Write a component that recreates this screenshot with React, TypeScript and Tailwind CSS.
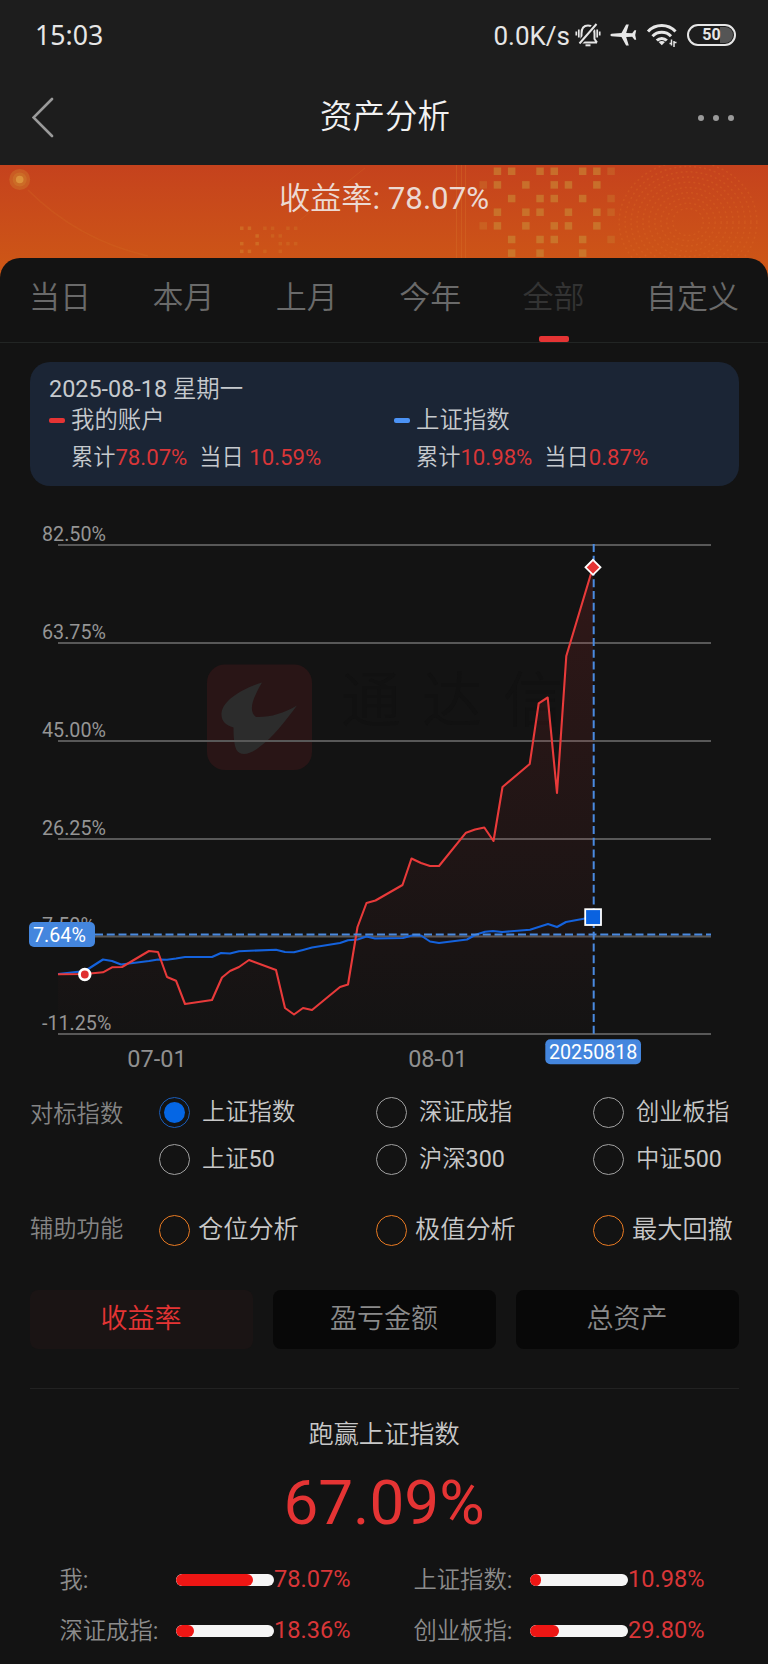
import clsx from "clsx";

const TABS = ["当日", "本月", "上月", "今年", "全部", "自定义"];

const INDEXES = ["上证指数", "深证成指", "创业板指", "上证50", "沪深300", "中证500"];

const TOOLS = ["仓位分析", "极值分析", "最大回撤"];

const MODES = ["收益率", "盈亏金额", "总资产"];

const COMPARE = [
  { label: "我:", value: 78.07 },
  { label: "上证指数:", value: 10.98 },
  { label: "深证成指:", value: 18.36 },
  { label: "创业板指:", value: 29.8 },
];

const GRID = [
  { y: 545, label: "82.50%" },
  { y: 643, label: "63.75%" },
  { y: 741, label: "45.00%" },
  { y: 839, label: "26.25%" },
  { y: 936.5, label: "7.50%" },
  { y: 1034, label: "-11.25%" },
];

const ACCOUNT_LINE =
  "58,974.3 85,974 103,972.3 112,967.3 122,967 149,951 158,952 167,977 176,980.7 185,1004 212,1000 222,977.5 230,971 239,967 249,960 276,970 285,1008 294,1014.5 303,1008 312,1010 340,987 348,984.5 357.5,927 366.5,903 375.5,900.5 402.5,885 411.5,858.5 421,863 430,866 439,866 466,832.7 475,829.5 484.3,827.5 493.5,841 502.5,787 529.7,764 538.7,703.3 547.7,697.5 557,793 566.3,656 593,567";

const INDEX_LINE =
  "58,974 85,971 103,959.5 112,961 121,964.5 149,961 158,959.5 167,959.7 176,958.5 185,957 212,957 221,953 230,953.5 239,951.2 276,949.8 285,952 294,952.3 303,950 312,947.5 340,943 348,940.3 357.5,939.5 366.5,936.5 375,938.5 403,938 412,935.5 421,935.5 430,941.5 439,943 467,939.5 475,935 485,931.8 493,931 502,932 530,929.7 548,924 557,927 566,922 585,918.5 593,917";

// column indexes of the lit squares, row by row
const PIXELS = [
  [1, 2, 4, 5, 7, 8, 9],
  [0, 1, 3, 5, 6, 8],
  [2, 4, 5, 7, 9],
  [1, 3, 4, 6, 8, 9],
  [0, 1, 3, 5, 6, 8],
  [2, 4, 5, 7, 9],
  [2, 4, 7],
];

const SMALL_PIXELS = [
  [0, 1, 3, 4, 6, 7],
  [2, 4, 5],
  [0, 2, 5, 6, 7],
  [0, 1, 3, 5],
];

function StatusBar() {
  return (
    <div className="flex h-[70px] items-center justify-between pl-[35px] pr-8 text-[#e6e6e6]">
      <span className="font-['Noto_Sans'] text-[26.7px] leading-none">15:03</span>
      <div className="flex items-center">
        <span className="pt-px text-[26px] leading-none">0.0K/s</span>
        <svg className="ml-[5px]" width="26" height="26" viewBox="0 0 26 26" fill="none" stroke="currentColor" strokeWidth="2">
          <path d="M4.500 20.500h17.500M6.500 18.500V11.500C6.500 6.500 9 3.500 13 3.500s6.500 3 6.500 8V17l2.500 3.500M4 20.500l2.500-3" />
          <path d="M10.500 23.300h5" strokeWidth="2" />
          <path d="M4 22 21.500 1.500" stroke="#1d1d1d" strokeWidth="5" />
          <path d="M4.500 21.500 21.500 2" />
          <path d="M3.800 7.500v8M1.300 9.500v4M22.200 7.500v8M24.700 9.500v4" strokeWidth="1.700" />
        </svg>
        <svg className="ml-[9px]" width="27" height="24" viewBox="0 0 27 24" fill="currentColor">
          <path d="M1.500 10.700c-1.500.4-1.500 2.200 0 2.600l10 .7 4.600 8.500h2.700L16.200 14l6-.3 2.300 3h1.700L25.200 12l1-4.700h-1.700l-2.300 3-6-.3 2.600-8.500h-2.700L11.500 10z" />
        </svg>
        <svg className="ml-[9px]" width="32" height="26" viewBox="0 0 32 26" fill="none" stroke="currentColor" strokeWidth="3">
          <path d="M2 9.500c7.500-8 20-8 27.500 0M6.500 14.200c5-5.200 13.500-5.200 18.500 0M10.800 18.500c2.800-2.800 7.200-2.800 10 0" />
          <path d="M15.800 23.300l-3.200-3.300c1.900-1.500 4.500-1.500 6.400 0z" fill="currentColor" stroke="none" />
          <path d="M25.500 17.500v6M28 19v6M23.500 21.500h2M28 20.500h2.500" strokeWidth="1.500" />
        </svg>
        <div className="ml-[9px] flex h-[22px] w-[49px] rounded-full border-2 border-current p-px">
          <div className="flex h-full w-full items-center justify-center rounded-full bg-linear-to-r from-transparent from-70% to-[#555] to-70% text-[16px] font-bold leading-none">
            50
          </div>
        </div>
      </div>
    </div>
  );
}

function TitleBar() {
  return (
    <div className="flex h-[95px] items-center justify-between pl-8 pr-[34px]">
      <svg width="34" height="42" viewBox="0 0 34 42" fill="none" stroke="#9a9a9a" strokeWidth="2.600" strokeLinecap="round">
        <path d="M20 2 1.500 20.500 20 39" />
      </svg>
      <h1 className="pl-[6px] text-[32.5px] leading-none text-[#f2f2f2]">资产分析</h1>
      <div className="flex gap-[9px]">
        <i className="size-[6px] rounded-full bg-[#9a9a9a]" />
        <i className="size-[6px] rounded-full bg-[#9a9a9a]" />
        <i className="size-[6px] rounded-full bg-[#9a9a9a]" />
      </div>
    </div>
  );
}

function BannerArt() {
  return (
    <svg className="absolute inset-0" width="768" height="124" viewBox="0 165 768 124">
      <circle cx="19.700" cy="179.500" r="10.500" fill="#d08a30" opacity="0.350" />
      <circle cx="19.700" cy="179.500" r="7" fill="#d08a30" opacity="0.350" />
      <circle cx="19.700" cy="179.500" r="3.800" fill="#e09a40" opacity="0.800" />
      <path d="M28 190q50 50 120 66" fill="none" stroke="#d87a28" strokeWidth="1.500" opacity="0.200" />
      <path d="M300 220l65-52" fill="none" stroke="#d87a28" strokeWidth="1" opacity="0.200" />
      {SMALL_PIXELS.map((row, r) =>
        row.map((c) => (
          <rect key={`${r}-${c}`} x={240 + c * 7.700} y={226.500 + r * 7.700} width="3.500" height="3.500" fill="#d48a30" opacity={c < 3 ? 0.450 : 0.250} />
        ))
      )}
      {PIXELS.map((row, r) =>
        row.map((c) => (
          <rect key={`${r}-${c}`} x={479.500 + c * 14.200} y={167.500 + r * 13.650} width="7.500" height="7.500" fill="#c98a35" opacity={c === 0 || c === 9 ? 0.300 : 0.600} />
        ))
      )}
      <path d="M456.500 165v95M461.500 165v95M465.500 165v95" stroke="#d8742a" strokeWidth="1" opacity="0.350" />
      <g fill="none" stroke="#dd6a25" strokeWidth="1.500" strokeDasharray="2 3" opacity="0.350">
        {[18, 25, 32, 39, 46, 53, 60, 67, 74, 81].map((r) => (
          <ellipse key={r} cx="688" cy="222" rx={r * 0.850} ry={r * 0.750} />
        ))}
      </g>
    </svg>
  );
}

function Tabs() {
  return (
    <nav className="flex h-[85px] justify-between border-b border-[#222524] px-[29px]">
      {TABS.map((tab) => (
        <button
          key={tab}
          className={clsx(
            "relative flex items-start pt-[20px] text-[31px] leading-10",
            tab === "全部" ? "text-[#333]" : "text-[#6a6a6a]"
          )}
        >
          {tab}
          {tab === "全部" && (
            <span className="absolute bottom-0 left-1/2 h-[6px] w-[30px] -translate-x-1/2 rounded-[2px] bg-[#e53434]" />
          )}
        </button>
      ))}
    </nav>
  );
}

function Summary() {
  return (
    <section className="mx-[29.5px] mt-[19px] h-[124px] rounded-[20px] bg-[#1b2535] px-[19.5px] pt-3 text-[23.4px] leading-[30px] text-[#c6cace]">
      <div>2025-08-18 星期一</div>
      <div className="mt-px grid grid-cols-[345px_1fr]">
        <div className="flex items-center gap-[6px]">
          <i className="h-[5px] w-4 rounded-[2px] bg-[#e53434]" />
          我的账户
        </div>
        <div className="flex items-center gap-[6px]">
          <i className="h-[5px] w-4 rounded-[2px] bg-[#4c93f5]" />
          上证指数
        </div>
      </div>
      <div className="mt-[7px] grid grid-cols-[345px_1fr] pl-[22px] text-[22.2px]">
        <div>
          累计<span className="mr-3 text-[#d93638]">78.07%</span>当日 <span className="text-[#d93638]">10.59%</span>
        </div>
        <div>
          累计<span className="mr-3 text-[#d93638]">10.98%</span>当日<span className="text-[#d93638]">0.87%</span>
        </div>
      </div>
    </section>
  );
}

function Chart() {
  return (
    <svg className="block" width="768" height="594" viewBox="0 486 768 594" fill="none">
      <defs>
        <linearGradient id="area" gradientUnits="userSpaceOnUse" x1="0" y1="567" x2="0" y2="1034">
          <stop offset="0" stopColor="#e53434" stopOpacity="0.140" />
          <stop offset="1" stopColor="#e53434" stopOpacity="0.005" />
        </linearGradient>
      </defs>

      {/* watermark */}
      <rect x="207" y="664.500" width="105" height="105.500" rx="18" fill="#291516" />
      <path
        d="M262 682.500C243 688 223 700 221.500 713c-.5 8 4 12 12 14.500 0 9 .5 17 3 22.500 4 6 12 5 21-1.500 16-11 28-28 39.500-43-14 8-27 12-41 11.500-8-6-3.500-18 6-34.500z"
        fill="#2c2c2c"
      />
      <text x="341" y="722" fill="#111111" fontSize="60" letterSpacing="21">
        通达信
      </text>

      {GRID.map((g) => (
        <g key={g.label}>
          <path d={`M58 ${g.y}H711`} stroke="#585858" strokeWidth="2" />
          <text x="42" y={g.y - 4.500} fill="#959595" fontSize="19.700">
            {g.label}
          </text>
        </g>
      ))}

      <polygon points={`${ACCOUNT_LINE} 593,1034 58,1034`} fill="url(#area)" />
      <polyline points={INDEX_LINE} stroke="#1462dc" strokeWidth="2.100" strokeLinejoin="round" />
      <polyline points={ACCOUNT_LINE} stroke="#e83a3a" strokeWidth="2.100" strokeLinejoin="round" />

      <path d="M95 934.500H711M593.700 544V1034" stroke="#4a8ae0" strokeWidth="2" strokeDasharray="8 3.750" />

      <circle cx="84.800" cy="974.500" r="5.300" fill="#e02f2f" stroke="#fff" strokeWidth="2.800" />
      <path d="M593 559.800l7.500 7.500-7.500 7.500-7.500-7.500z" fill="#e53434" stroke="#fff" strokeWidth="1.800" />
      <rect x="585.200" y="909.200" width="15.800" height="15.800" fill="#0a62e0" stroke="#fff" strokeWidth="1.800" />

      <rect x="29" y="922" width="66" height="25" rx="5" fill="#4486de" />
      <text x="33" y="941.500" fill="#fff" fontSize="19.700">
        7.64%
      </text>
      <rect x="545.300" y="1039.300" width="95.700" height="25" rx="5" fill="#4486de" />
      <text x="593.200" y="1059" fill="#fff" fontSize="19.700" textAnchor="middle">
        20250818
      </text>

      <g fill="#909090" fontSize="23.500" textAnchor="middle">
        <text x="157" y="1067">07-01</text>
        <text x="437.800" y="1067">08-01</text>
      </g>
    </svg>
  );
}

function Radio({ tone }: { tone: "on" | "off" | "tool" }) {
  return (
    <span
      className={clsx(
        "flex size-[31px] shrink-0 items-center justify-center rounded-full border-[1.5px]",
        tone === "on" && "border-[#1a5cb8]",
        tone === "off" && "border-[#a0a0a0]",
        tone === "tool" && "border-[#e87a22]"
      )}
    >
      {tone === "on" && <span className="size-[21px] rounded-full bg-[#0566e4]" />}
    </span>
  );
}

function Options() {
  return (
    <section className="pl-[30px]">
      <div className="flex pt-[9px]">
        <div className="w-[129px] pt-[2px] text-[23.3px] leading-[47px] text-[#858585]">对标指数</div>
        <div className="grid grid-cols-[217px_217px_1fr] text-[23.3px] leading-[47px] text-[#c8c8c8]">
          {INDEXES.map((name, i) => (
            <label key={name} className="flex h-[47px] items-center gap-3">
              <Radio tone={i === 0 ? "on" : "off"} />
              <span className="-mt-px whitespace-nowrap">{name}</span>
            </label>
          ))}
        </div>
      </div>
      <div className="mt-6 flex">
        <div className="w-[129px] text-[23.3px] leading-[45px] text-[#858585]">辅助功能</div>
        <div className="grid grid-cols-[217px_217px_1fr] text-[25.2px] text-[#c8c8c8]">
          {TOOLS.map((name) => (
            <label key={name} className="flex h-[47px] items-center gap-[8px]">
              <Radio tone="tool" />
              <span className="-mt-px whitespace-nowrap">{name}</span>
            </label>
          ))}
        </div>
      </div>
    </section>
  );
}

function ModeSwitch() {
  return (
    <div className="mx-[29.5px] mt-[36px] grid grid-cols-3 gap-5">
      {MODES.map((mode, i) => (
        <button
          key={mode}
          className={clsx(
            "h-[59px] rounded-lg text-[27px]",
            i === 0 ? "bg-[#1a1414] text-[#e53434]" : "bg-[#080808] text-[#8a8a8a]"
          )}
        >
          {mode}
        </button>
      ))}
    </div>
  );
}

function Beat() {
  return (
    <section className="mx-[29.5px] mt-[39px] border-t border-[#222] pt-[28px] text-center">
      <h2 className="text-[25.2px] leading-9 text-[#c8c8c8]">跑赢上证指数</h2>
      <div className="mt-[10px] text-[62px] leading-[80px] text-[#e53434]">67.09%</div>
      <div className="mt-[17px] grid grid-cols-[354px_1fr] gap-y-[11px] pl-[30px] text-left">
        {COMPARE.map((item) => (
          <div key={item.label} className="flex h-10 items-center">
            <span className="w-[116.5px] shrink-0 whitespace-nowrap text-[23.3px] text-[#8c8c8c]">{item.label}</span>
            <span className="h-3 w-[98px] shrink-0 overflow-hidden rounded-full bg-[#f5f5f5]">
              <span className="block h-full rounded-full bg-[#ee1614]" style={{ width: `${item.value}%` }} />
            </span>
            <span className="text-[23.6px] text-[#d93638]">{item.value.toFixed(2)}%</span>
          </div>
        ))}
      </div>
    </section>
  );
}

export default function App() {
  return (
    <main className="h-[1664px] w-[768px] overflow-hidden bg-[#131313] font-[Roboto,'Noto_Sans_CJK_SC_DemiLight','Noto_Sans_CJK_SC',sans-serif]">
      <header className="bg-[#1d1d1d]">
        <StatusBar />
        <TitleBar />
      </header>
      <div className="relative h-[124px] bg-linear-to-b from-[#c5421d] to-[#cf5a14]">
        <BannerArt />
        <p className="relative pt-[14px] text-center text-[31.2px] leading-10 text-[#ecd9d2]">收益率: 78.07%</p>
      </div>
      <div className="relative -mt-[31px] rounded-t-[20px] bg-[#131313]">
        <Tabs />
        <Summary />
        <Chart />
        <Options />
        <ModeSwitch />
        <Beat />
      </div>
    </main>
  );
}
